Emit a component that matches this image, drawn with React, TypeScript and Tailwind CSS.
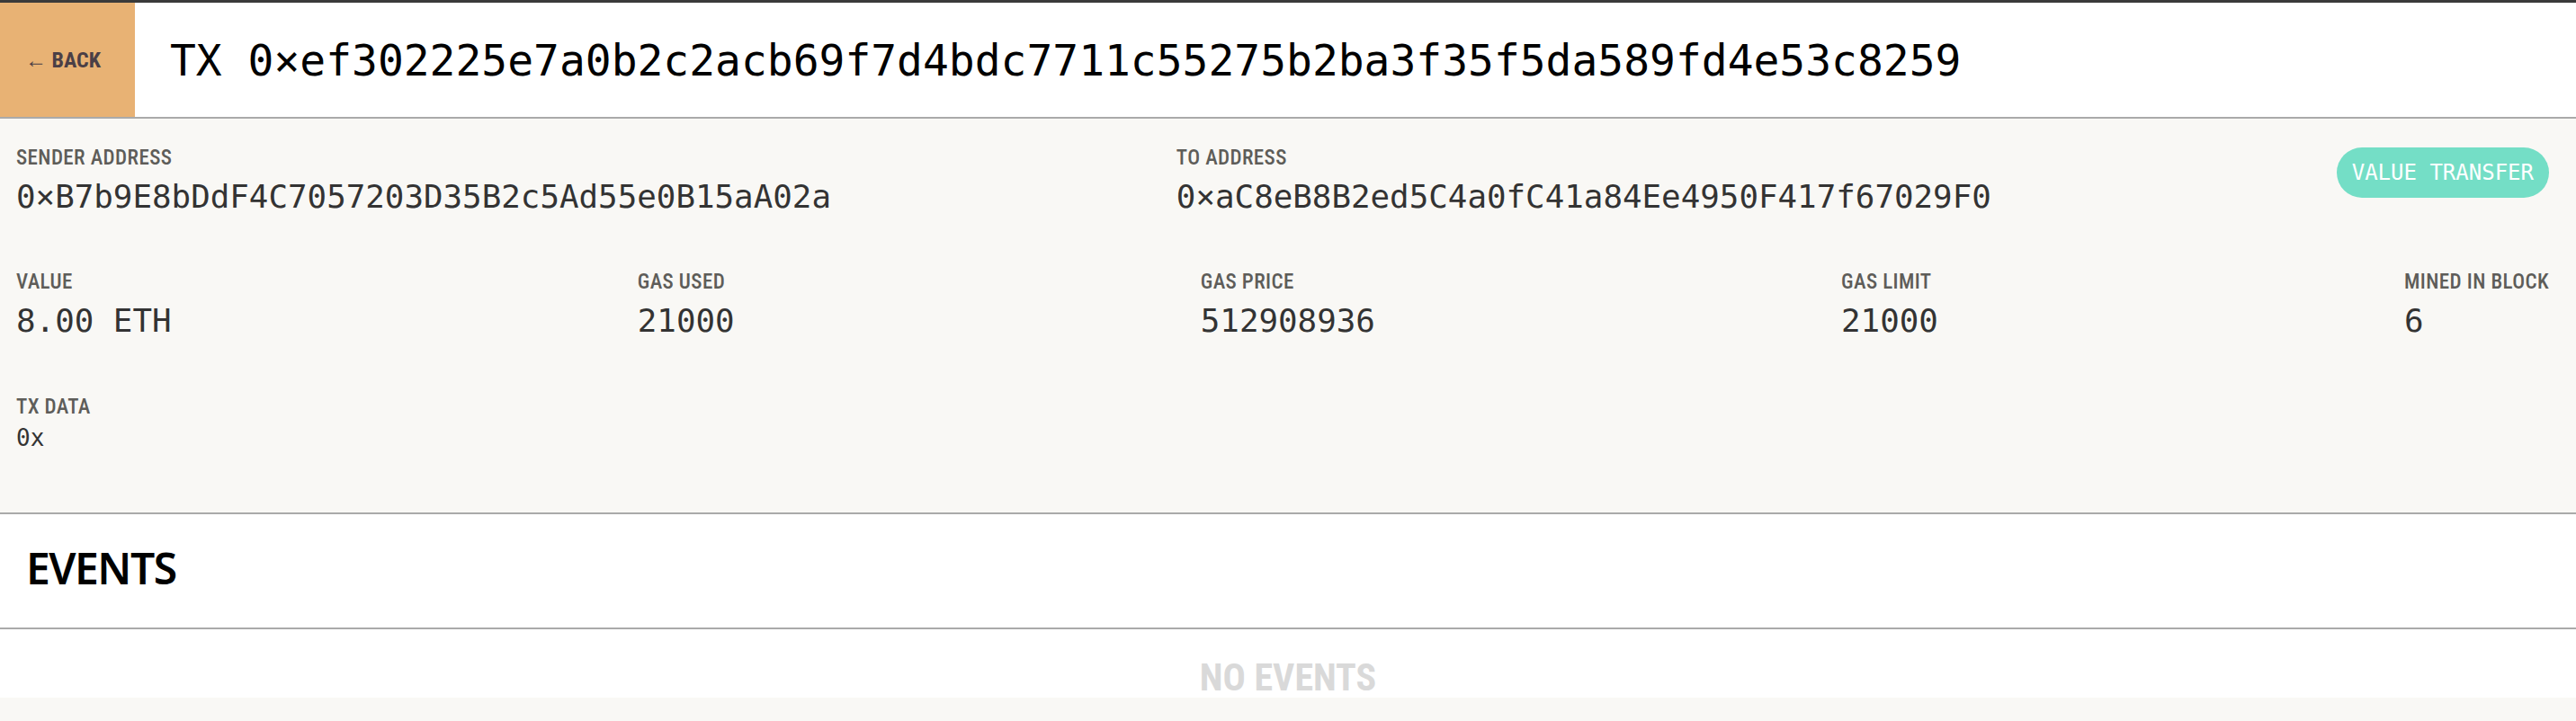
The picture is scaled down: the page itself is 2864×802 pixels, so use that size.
import React from "react";

const MONO = "font-['DejaVu_Sans_Mono','Liberation_Mono',monospace]";
const COND = "font-['Roboto_Condensed',Roboto,sans-serif] font-stretch-condensed";

function Label({ children }: { children: React.ReactNode }) {
  return (
    <div className={`${COND} font-medium text-[23px] leading-[22px] tracking-[0.4px] text-[#5e5d59] uppercase whitespace-nowrap`}>
      {children}
    </div>
  );
}

function Field({ label, value }: { label: string; value: string }) {
  return (
    <div className="flex flex-col">
      <Label>{label}</Label>
      <div className={`${MONO} mt-[10px] text-[35.85px] leading-[43px] text-[#333333] whitespace-nowrap`}>
        {value}
      </div>
    </div>
  );
}

export default function App() {
  return (
    <div className="min-h-screen bg-[#f9f8f5] flex flex-col">
      <div className="h-[3px] bg-[#3a3a3a]" />
      <header className="h-[129px] bg-white border-b-2 border-[#aaaaaa] flex">
        <div className="w-[150px] h-full bg-[#e8b274] flex items-center pl-[28px]">
          <span className={`${COND} font-bold text-[24px] leading-[24px] text-[#4b3f46] whitespace-nowrap`}>
            ← BACK
          </span>
        </div>
        <div className="flex items-center pl-[39px]">
          <h1 className={`${MONO} text-[47.95px] leading-[48px] text-black whitespace-nowrap`}>
            TX 0×ef302225e7a0b2c2acb69f7d4bdc7711c55275b2ba3f35f5da589fd4e53c8259
          </h1>
        </div>
      </header>

      <section className="bg-[#f9f8f5] pl-[18px] pr-[30px] pt-[33px] pb-[67px] flex flex-col border-b-2 border-[#aaaaaa]">
        <div className="flex justify-between items-start">
          <Field label="Sender Address" value="0×B7b9E8bDdF4C7057203D35B2c5Ad55e0B15aA02a" />
          <Field label="To Address" value="0×aC8eB8B2ed5C4a0fC41a84Ee4950F417f67029F0" />
          <div className="-mt-[1px] h-[56px] rounded-full bg-[#74dec6] flex items-center px-[17px]">
            <span className={`${MONO} text-[24px] leading-[24px] text-white whitespace-nowrap`}>
              VALUE TRANSFER
            </span>
          </div>
        </div>
        <div className="mt-[63px] flex justify-between items-start">
          <Field label="Value" value="8.00 ETH" />
          <Field label="Gas Used" value="21000" />
          <Field label="Gas Price" value="512908936" />
          <Field label="Gas Limit" value="21000" />
          <Field label="Mined in Block" value="6" />
        </div>
        <div className="mt-[64px] flex flex-col">
          <Label>TX Data</Label>
          <div className={`${MONO} mt-[8px] text-[26px] leading-[31px] text-[#333333]`}>0x</div>
        </div>
      </section>

      <section className="h-[128px] bg-white border-b-2 border-[#aaaaaa] pl-[29px] pt-[36px]">
        <h2 className="font-['Noto_Sans',sans-serif] font-semibold text-[48px] leading-[48px] tracking-[-1.5px] text-black">
          EVENTS
        </h2>
      </section>

      <div className="h-[76px] bg-white pt-[33px] flex justify-center">
        <span className={`${COND} font-bold text-[42px] leading-[42px] text-[#d9d9d9] whitespace-nowrap`}>
          NO EVENTS
        </span>
      </div>
    </div>
  );
}
